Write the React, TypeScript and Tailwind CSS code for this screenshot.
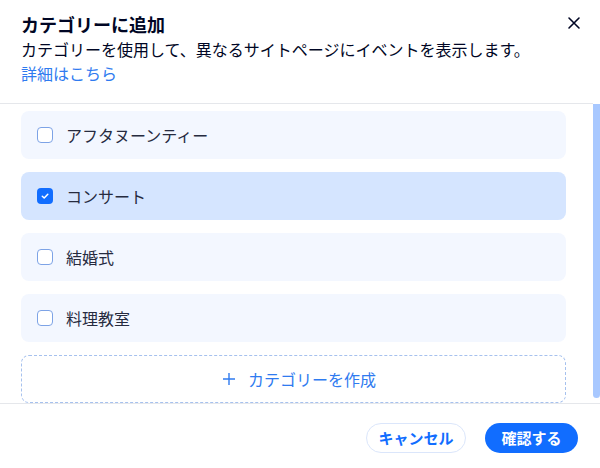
import React from "react";

const font = { fontFamily: '"Noto Sans CJK JP", "Noto Sans", sans-serif' };

function Checkbox({ checked }: { checked: boolean }) {
  if (checked) {
    return (
      <span className="flex h-4 w-4 shrink-0 items-center justify-center rounded-[4px] bg-[#116dff]">
        <svg width="10" height="10" viewBox="0 0 10 10" fill="none">
          <path d="M2.3 5.2 L4.2 7 L7.8 3.2" stroke="white" strokeWidth="1.5" strokeLinecap="round" strokeLinejoin="round" />
        </svg>
      </span>
    );
  }
  return <span className="block h-4 w-4 shrink-0 rounded-[4px] border border-[#7da3e6] bg-white" />;
}

function Item({ label, checked }: { label: string; checked?: boolean }) {
  return (
    <div
      className={`flex h-12 shrink-0 items-center gap-[13px] rounded-lg pl-4 ${
        checked ? "bg-[#d5e5ff]" : "bg-[#f3f7ff]"
      }`}
    >
      <Checkbox checked={!!checked} />
      <span className="text-[16px] leading-6 text-[#262b3f]">{label}</span>
    </div>
  );
}

export default function App() {
  return (
    <div className="flex h-[468px] w-[600px] flex-col bg-white" style={font}>
      <div className="relative px-[21px] pt-3 pb-[18px]">
        <h1 className="text-[18px] font-bold leading-6 text-[#000624]">カテゴリーに追加</h1>
        <p className="mt-px text-[16px] leading-6 text-[#000624]">
          カテゴリーを使用して、異なるサイトページにイベントを表示します。
        </p>
        <a className="block text-[16px] leading-6 text-[#2f7bf0]">詳細はこちら</a>
        <button className="absolute right-[18px] top-[15px] flex h-4 w-4 items-center justify-center">
          <svg width="14" height="14" viewBox="0 0 14 14" fill="none">
            <path d="M2 2 L12 12 M12 2 L2 12" stroke="#000624" strokeWidth="1.6" strokeLinecap="round" />
          </svg>
        </button>
      </div>
      <div className="mr-[7px] h-px bg-[#e5e7eb]" />
      <div className="flex h-[299px] overflow-hidden">
        <div className="flex flex-1 flex-col gap-[13px] pl-[21px] pr-[27px] pt-[7px]">
          <Item label="アフタヌーンティー" />
          <Item label="コンサート" checked />
          <Item label="結婚式" />
          <Item label="料理教室" />
          <button className="flex h-12 shrink-0 items-center justify-center gap-[12px] rounded-lg border border-dashed border-[#a6c1ee] pl-[11px] text-[16px] text-[#2f7bf0]">
            <svg width="14" height="14" viewBox="0 0 14 14" fill="none">
              <path d="M7 1 V13 M1 7 H13" stroke="#2f7bf0" strokeWidth="1.4" />
            </svg>
            <span className="leading-6">カテゴリーを作成</span>
          </button>
        </div>
        <div className="mb-[5px] w-[7px] rounded-b-full bg-[#a8c8ff]" />
      </div>
      <div className="h-px bg-[#e5e7eb]" />
      <div className="flex justify-end gap-[19px] pr-[22px] pt-[19px]">
        <button className="h-[30px] w-[100px] rounded-full border border-[#dbe6fb] bg-white text-[15px] font-bold text-[#116dff]">
          キャンセル
        </button>
        <button className="h-[30px] w-[93px] rounded-full bg-[#116dff] text-[15px] font-bold text-white">
          確認する
        </button>
      </div>
    </div>
  );
}
